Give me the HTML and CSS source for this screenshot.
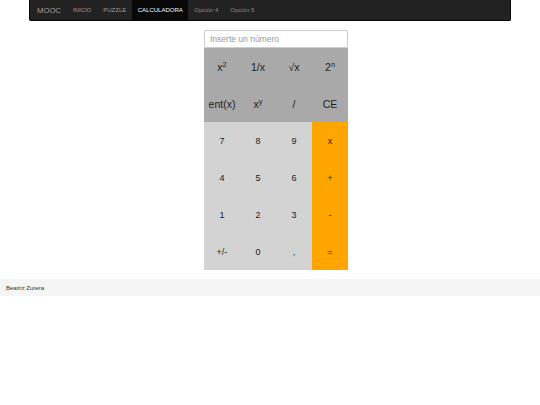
FILE: index.html
```html
<!DOCTYPE html>
<html lang="es">
<head>
<meta charset="utf-8">
<title>MOOC Calculadora</title>
<link rel="stylesheet" href="styles.css">
</head>
<body>
<nav class="navbar">
  <span class="brand">MOOC</span>
  <a class="link">INICIO</a>
  <a class="link">PUZZLE</a>
  <a class="link active">CALCULADORA</a>
  <a class="link muted">Opción 4</a>
  <a class="link muted">Opción 5</a>
</nav>
<main class="calc">
  <div class="display">Inserte un número</div>
  <div class="keys">
    <div class="key fn">x<sup>2</sup></div>
    <div class="key fn">1/x</div>
    <div class="key fn">√x</div>
    <div class="key fn">2<sup>n</sup></div>
    <div class="key fn">ent(x)</div>
    <div class="key fn">x<sup>y</sup></div>
    <div class="key fn">/</div>
    <div class="key fn">CE</div>
    <div class="key num">7</div>
    <div class="key num">8</div>
    <div class="key num">9</div>
    <div class="key op">x</div>
    <div class="key num">4</div>
    <div class="key num">5</div>
    <div class="key num">6</div>
    <div class="key op">+</div>
    <div class="key num">1</div>
    <div class="key num">2</div>
    <div class="key num">3</div>
    <div class="key op">-</div>
    <div class="key num">+/-</div>
    <div class="key num">0</div>
    <div class="key num">,</div>
    <div class="key op">=</div>
  </div>
</main>
<footer class="footer">Beatriz Zurera</footer>
</body>
</html>
```
FILE: styles.css
```css
html, body {
  margin: 0;
  padding: 0;
  background: #fff;
  font-family: "Liberation Sans", Arial, sans-serif;
  color: #333;
}
.navbar {
  display: flex;
  align-items: stretch;
  width: 480px;
  height: 20px;
  margin: 0 0 0 29px;
  background: #222;
  border: 1px solid #080808;
  border-top: none;
  border-radius: 0 0 2px 2px;
}
.brand {
  display: flex;
  align-items: center;
  padding: 0 6px 0 7px;
  font-size: 7.7px;
  color: #9d9d9d;
}
.link {
  display: flex;
  align-items: center;
  padding: 0 6px;
  font-size: 6px;
  color: #9d9d9d;
}
.link.active {
  background: #080808;
  color: #fff;
  padding: 0 5.5px;
}
.link.muted {
  color: #8a8a8a;
}
.calc {
  width: 144px;
  margin: 9px 0 0 204px;
}
.display {
  box-sizing: border-box;
  height: 18px;
  padding: 0 5px;
  display: flex;
  align-items: center;
  border: 1px solid #ccc;
  border-radius: 2px 2px 0 0;
  font-size: 8.5px;
  color: #999;
}
.keys {
  display: grid;
  grid-template-columns: repeat(4, 36px);
  grid-auto-rows: 37px;
}
.key {
  display: flex;
  align-items: center;
  justify-content: center;
  color: #222;
}
.key sup {
  font-size: 70%;
  position: relative;
  top: -0.25em;
  line-height: 0;
}
.fn {
  background: #a9a9a9;
  font-size: 10.5px;
}
.num {
  background: #d3d3d3;
  font-size: 9px;
}
.op {
  background: #ffa500;
  font-size: 9px;
}
.footer {
  margin-top: 9px;
  height: 17px;
  display: flex;
  align-items: center;
  padding: 0 6px;
  background: #f5f5f5;
  font-size: 6px;
  color: #333;
}
```
